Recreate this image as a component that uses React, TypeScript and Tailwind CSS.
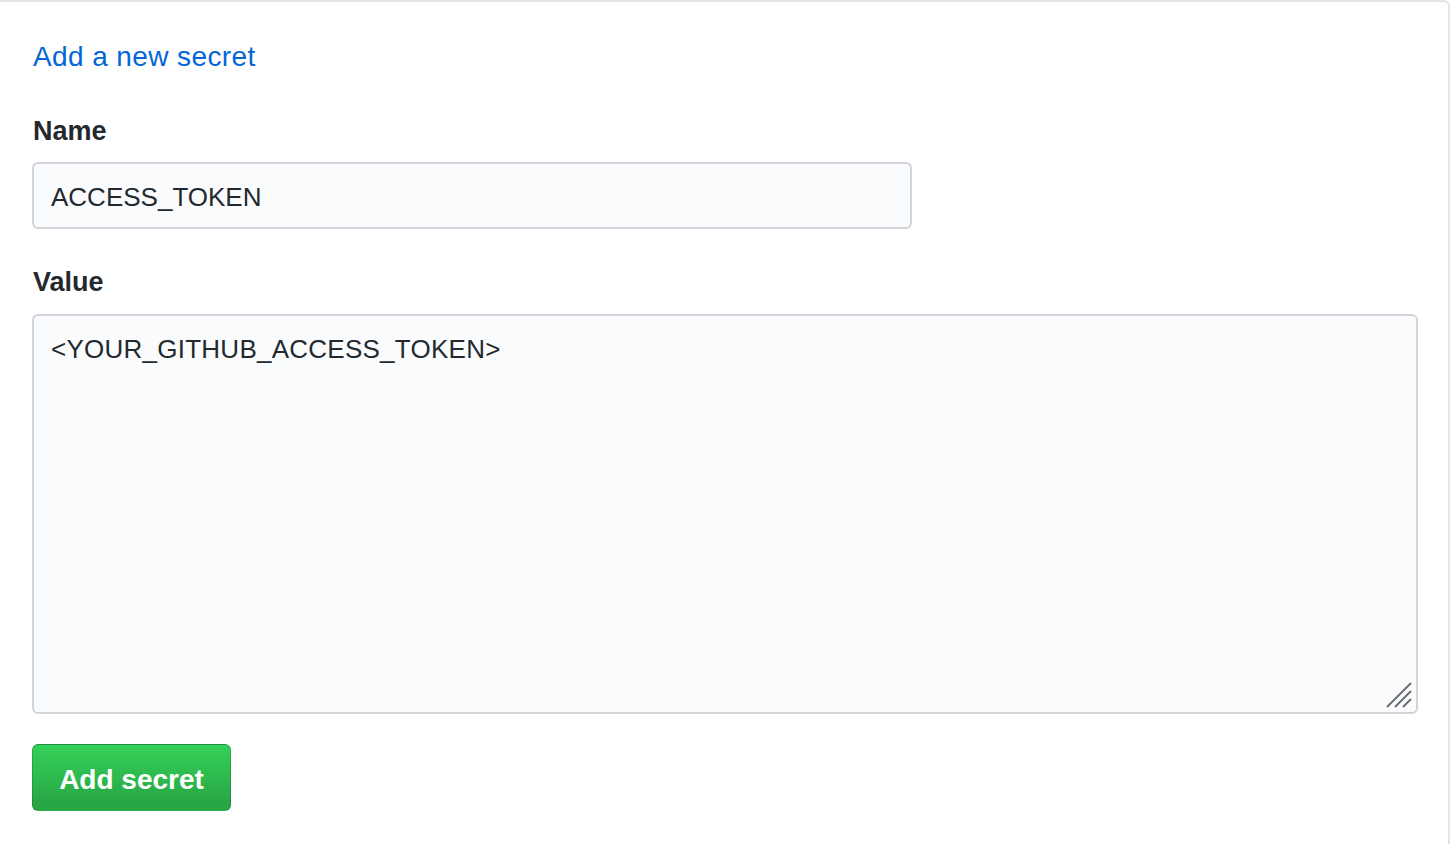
const font = "font-['Liberation_Sans',Arial,sans-serif]"

function ResizeGrip() {
  return (
    <svg
      className="absolute right-[3px] bottom-[3px]"
      width="28"
      height="28"
      viewBox="0 0 28 28"
    >
      <line x1="2" y1="26" x2="26" y2="2" stroke="#6a6d70" strokeWidth="2" />
      <line x1="10" y1="26" x2="26" y2="10" stroke="#6a6d70" strokeWidth="2" />
      <line x1="18" y1="26" x2="26" y2="18" stroke="#6a6d70" strokeWidth="2" />
    </svg>
  )
}

export default function App() {
  return (
    <div className={`w-[1450px] h-[844px] overflow-hidden bg-white ${font}`}>
      <div className="h-[860px] w-[1450px] border-t-2 border-r-2 border-[#e1e4e8] rounded-tr-[6px] pl-[32px] pt-[35px] pr-[30px]">
        <a className="block text-[28px] leading-[40px] tracking-[0.4px] text-[#0366d6] pl-px">
          Add a new secret
        </a>

        <div className="mt-[36px] text-[27px] leading-[36px] font-bold text-[#24292e] pl-px">
          Name
        </div>
        <div className="mt-[13px] w-[880px] h-[67px] border-2 border-[#d1d5da] rounded-[6px] bg-[#fafbfc] px-[17px] pt-[15px] text-[26px] leading-[36px] text-[#24292e]">
          ACCESS_TOKEN
        </div>

        <div className="mt-[35px] text-[27px] leading-[36px] font-bold text-[#24292e] pl-px">
          Value
        </div>
        <div className="relative mt-[14px] w-[1386px] h-[400px] border-2 border-[#d1d5da] rounded-[6px] bg-[#fafbfc] px-[17px] pt-[15px] text-[26px] leading-[36px] tracking-[0.25px] text-[#24292e]">
          {"<YOUR_GITHUB_ACCESS_TOKEN>"}
          <ResizeGrip />
        </div>

        <button className="mt-[30px] flex h-[67px] w-[199px] items-start justify-center rounded-[6px] border border-[rgba(27,31,35,0.2)] bg-[linear-gradient(-180deg,#34d058_0%,#28a745_90%)] pt-[17px] text-[28px] leading-[36px] font-bold text-white">
          Add secret
        </button>
      </div>
    </div>
  )
}
